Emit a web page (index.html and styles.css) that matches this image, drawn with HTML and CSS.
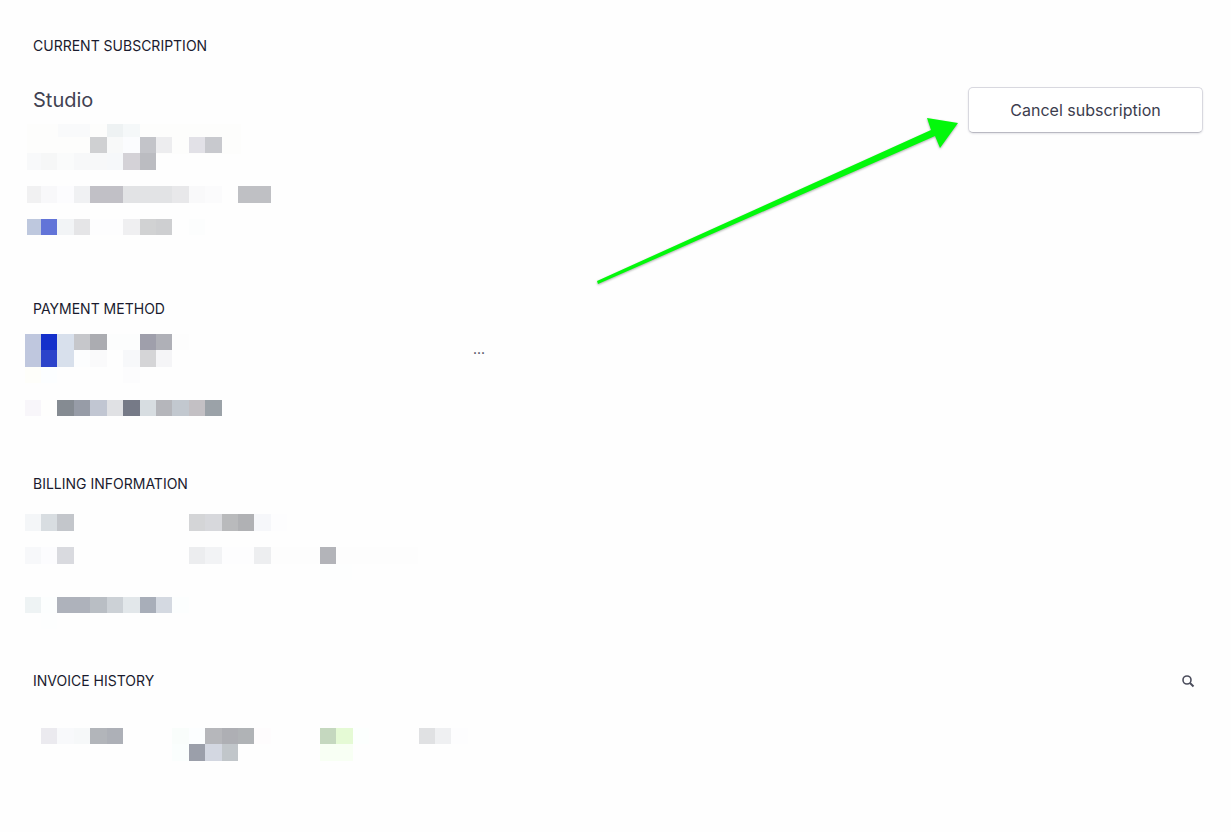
FILE: index.html
```html
<!DOCTYPE html>
<html lang="en">
<head>
    <meta charset="UTF-8">
    <title>Billing</title>
    <link rel="stylesheet" href="styles.css">
</head>
<body>
    <main class="billing">
        <section class="subscription">
            <h2>Current subscription</h2>
            <div class="row">
                <div class="plan">
                    <h3>Studio</h3>
                    <svg class="mosaic" width="260" height="112" shape-rendering="crispEdges" aria-hidden="true">
                        <rect x="2" y="0" width="214" height="30" fill="#fdfdfc"/>
                        <rect x="33" y="0" width="32" height="13" fill="#f9fafb"/>
                        <rect x="82" y="0" width="16" height="13" fill="#eef2f3"/>
                        <rect x="98" y="0" width="17" height="13" fill="#f5f8f9"/>
                        <rect x="65" y="13" width="17" height="16" fill="#cfd0d2"/>
                        <rect x="82" y="13" width="16" height="16" fill="#f8f9f9"/>
                        <rect x="98" y="13" width="17" height="16" fill="#fbfcfe"/>
                        <rect x="115" y="13" width="16" height="16" fill="#c3c4c9"/>
                        <rect x="131" y="13" width="16" height="16" fill="#ededef"/>
                        <rect x="164" y="13" width="16" height="16" fill="#e2e1e7"/>
                        <rect x="180" y="13" width="17" height="16" fill="#c8c9ce"/>
                        <rect x="2" y="29" width="14" height="17" fill="#f8f9fa"/>
                        <rect x="16" y="29" width="16" height="17" fill="#f6f7f7"/>
                        <rect x="32" y="29" width="17" height="17" fill="#fafbfb"/>
                        <rect x="49" y="29" width="49" height="17" fill="#f7f8f9"/>
                        <rect x="82" y="29" width="16" height="17" fill="#f6f8fa"/>
                        <rect x="98" y="29" width="17" height="17" fill="#d4d2d7"/>
                        <rect x="115" y="29" width="16" height="17" fill="#bbbcc1"/>
                        <rect x="2" y="62" width="14" height="17" fill="#f1f1f2"/>
                        <rect x="16" y="62" width="16" height="17" fill="#f8f8fa"/>
                        <rect x="32" y="62" width="17" height="17" fill="#fcfcfe"/>
                        <rect x="49" y="62" width="16" height="17" fill="#f0f1f3"/>
                        <rect x="65" y="62" width="33" height="17" fill="#c1c0c6"/>
                        <rect x="98" y="62" width="49" height="17" fill="#e2e3e5"/>
                        <rect x="147" y="62" width="17" height="17" fill="#e8e8ea"/>
                        <rect x="164" y="62" width="16" height="17" fill="#f9f9fa"/>
                        <rect x="180" y="62" width="17" height="17" fill="#fbfbfc"/>
                        <rect x="213" y="62" width="33" height="17" fill="#bfc0c4"/>
                        <rect x="2" y="95" width="14" height="16" fill="#bec8de"/>
                        <rect x="16" y="95" width="16" height="16" fill="#6274d8"/>
                        <rect x="32" y="95" width="17" height="16" fill="#f2f4f6"/>
                        <rect x="49" y="95" width="16" height="16" fill="#e5e5e7"/>
                        <rect x="65" y="95" width="33" height="16" fill="#fdfdfe"/>
                        <rect x="98" y="95" width="17" height="16" fill="#efeff1"/>
                        <rect x="115" y="95" width="16" height="16" fill="#d1d2d3"/>
                        <rect x="131" y="95" width="16" height="16" fill="#cecfd1"/>
                        <rect x="164" y="95" width="16" height="16" fill="#fcfdfd"/>
                    </svg>
                </div>
                <div class="cancel">
                    <button type="button" class="cancel-button">Cancel subscription</button>
                    <svg class="arrow" width="363" height="170" viewBox="0 0 363 170" aria-hidden="true">
                        <path d="M1 164 L335 13 L331 1 L362 6 L344 31 L339 19 L2 167 Z" fill="#03f80b"/>
                    </svg>
                </div>
            </div>
        </section>

        <section class="payment">
            <h2>Payment method</h2>
            <div class="payment-row">
                <svg class="mosaic" width="200" height="83" shape-rendering="crispEdges" aria-hidden="true">
                    <rect x="0" y="0" width="16" height="33" fill="#bfc7de"/>
                    <rect x="16" y="0" width="16" height="16" fill="#1430cb"/>
                    <rect x="16" y="16" width="16" height="17" fill="#2c43ca"/>
                    <rect x="32" y="0" width="17" height="33" fill="#d8e0ec"/>
                    <rect x="49" y="0" width="16" height="16" fill="#c6c7cb"/>
                    <rect x="65" y="0" width="17" height="16" fill="#abacb1"/>
                    <rect x="82" y="0" width="33" height="16" fill="#fcfdfd"/>
                    <rect x="115" y="0" width="16" height="16" fill="#9f9fab"/>
                    <rect x="131" y="0" width="16" height="16" fill="#afb0b7"/>
                    <rect x="147" y="0" width="17" height="16" fill="#fdfdfd"/>
                    <rect x="49" y="16" width="16" height="17" fill="#fcfdfe"/>
                    <rect x="65" y="16" width="17" height="17" fill="#fafafb"/>
                    <rect x="98" y="16" width="17" height="17" fill="#f7f8fa"/>
                    <rect x="115" y="16" width="16" height="17" fill="#d5d5d7"/>
                    <rect x="131" y="16" width="16" height="17" fill="#f5f5f7"/>
                    <rect x="0" y="33" width="16" height="16" fill="#fefefa"/>
                    <rect x="16" y="33" width="16" height="16" fill="#fcfeff"/>
                    <rect x="98" y="33" width="17" height="16" fill="#fcfcfd"/>
                    <rect x="0" y="66" width="16" height="16" fill="#f8f6fa"/>
                    <rect x="16" y="66" width="16" height="16" fill="#fefefd"/>
                    <rect x="32" y="66" width="17" height="16" fill="#858b92"/>
                    <rect x="49" y="66" width="16" height="16" fill="#979ca7"/>
                    <rect x="65" y="66" width="17" height="16" fill="#c1c6d2"/>
                    <rect x="82" y="66" width="16" height="16" fill="#e0e1e4"/>
                    <rect x="98" y="66" width="17" height="16" fill="#767a87"/>
                    <rect x="115" y="66" width="16" height="16" fill="#d7dde1"/>
                    <rect x="131" y="66" width="16" height="16" fill="#b5b6bb"/>
                    <rect x="147" y="66" width="17" height="16" fill="#c2c8cf"/>
                    <rect x="164" y="66" width="16" height="16" fill="#c3c0c4"/>
                    <rect x="180" y="66" width="17" height="16" fill="#9ba2a8"/>
                </svg>
                <button type="button" class="more" aria-label="More options">...</button>
            </div>
        </section>

        <section class="information">
            <h2>Billing information</h2>
            <svg class="mosaic" width="400" height="117" shape-rendering="crispEdges" aria-hidden="true">
                <rect x="0" y="0" width="16" height="17" fill="#f4f6f8"/>
                <rect x="16" y="0" width="16" height="17" fill="#d8dde1"/>
                <rect x="32" y="0" width="17" height="17" fill="#c3c6cb"/>
                <rect x="164" y="0" width="16" height="17" fill="#d4d5d7"/>
                <rect x="180" y="0" width="17" height="17" fill="#d7d8dc"/>
                <rect x="197" y="0" width="16" height="17" fill="#b9babc"/>
                <rect x="213" y="0" width="16" height="17" fill="#b0b1b4"/>
                <rect x="229" y="0" width="17" height="17" fill="#f6f7fa"/>
                <rect x="246" y="0" width="16" height="17" fill="#fdfdfe"/>
                <rect x="0" y="33" width="16" height="17" fill="#f7f8fa"/>
                <rect x="16" y="33" width="16" height="17" fill="#fcfcfe"/>
                <rect x="32" y="33" width="17" height="17" fill="#d9dadf"/>
                <rect x="164" y="33" width="16" height="17" fill="#ecedef"/>
                <rect x="180" y="33" width="17" height="17" fill="#f2f3f5"/>
                <rect x="197" y="33" width="32" height="17" fill="#fdfdfe"/>
                <rect x="229" y="33" width="17" height="17" fill="#edeef0"/>
                <rect x="246" y="33" width="49" height="17" fill="#fdfdfd"/>
                <rect x="295" y="33" width="16" height="17" fill="#b3b4b9"/>
                <rect x="311" y="33" width="82" height="17" fill="#fdfdfd"/>
                <rect x="295" y="50" width="32" height="16" fill="#fdfefe"/>
                <rect x="0" y="83" width="16" height="16" fill="#eef3f4"/>
                <rect x="16" y="83" width="16" height="16" fill="#fcfefe"/>
                <rect x="32" y="83" width="33" height="16" fill="#aeb2bb"/>
                <rect x="65" y="83" width="17" height="16" fill="#b9bec4"/>
                <rect x="82" y="83" width="16" height="16" fill="#ccd1d6"/>
                <rect x="98" y="83" width="17" height="16" fill="#e2e7ea"/>
                <rect x="115" y="83" width="16" height="16" fill="#a8aeb9"/>
                <rect x="131" y="83" width="16" height="16" fill="#d4d9e1"/>
                <rect x="147" y="83" width="17" height="16" fill="#fcfefe"/>
                <rect x="16" y="99" width="16" height="16" fill="#fdfefe"/>
            </svg>
        </section>

        <section class="invoices">
            <div class="row">
                <h2>Invoice history</h2>
                <button type="button" class="search" aria-label="Search invoices">
                    <svg width="14" height="14" viewBox="0 0 14 14" aria-hidden="true">
                        <circle cx="6" cy="6" r="4" fill="none" stroke="#4b4d5c" stroke-width="1.6"/>
                        <path d="M9 9 L12.5 12.5" stroke="#4b4d5c" stroke-width="2"/>
                    </svg>
                </button>
            </div>
            <svg class="mosaic" width="450" height="33" shape-rendering="crispEdges" aria-hidden="true">
                <rect x="16" y="0" width="16" height="16" fill="#ebeaef"/>
                <rect x="32" y="0" width="17" height="16" fill="#f8f9fb"/>
                <rect x="49" y="0" width="16" height="16" fill="#f6f8f9"/>
                <rect x="65" y="0" width="17" height="16" fill="#b2b5ba"/>
                <rect x="82" y="0" width="16" height="16" fill="#adb0b7"/>
                <rect x="147" y="0" width="17" height="16" fill="#f9fdfb"/>
                <rect x="164" y="0" width="16" height="16" fill="#fcfeff"/>
                <rect x="180" y="0" width="17" height="16" fill="#b6b7bb"/>
                <rect x="197" y="0" width="16" height="16" fill="#aeafb4"/>
                <rect x="213" y="0" width="16" height="16" fill="#b0b3b6"/>
                <rect x="229" y="0" width="17" height="16" fill="#fefcfd"/>
                <rect x="147" y="16" width="17" height="17" fill="#fafefd"/>
                <rect x="164" y="16" width="16" height="17" fill="#9b9faa"/>
                <rect x="180" y="16" width="17" height="17" fill="#d3d7e1"/>
                <rect x="197" y="16" width="16" height="17" fill="#c1c6ca"/>
                <rect x="295" y="0" width="16" height="16" fill="#c5d8bf"/>
                <rect x="311" y="0" width="17" height="16" fill="#e5fad5"/>
                <rect x="295" y="16" width="33" height="17" fill="#f8fff4"/>
                <rect x="328" y="0" width="16" height="16" fill="#fcfffe"/>
                <rect x="394" y="0" width="16" height="16" fill="#e0e1e3"/>
                <rect x="410" y="0" width="16" height="16" fill="#eff0f2"/>
                <rect x="426" y="0" width="17" height="16" fill="#fdfdfe"/>
            </svg>
        </section>
    </main>
</body>
</html>
```

FILE: styles.css
```css
body {
    margin: 0;
    background-color: #fefefe;
    color: #1a1b2e;
    font-family: Inter, "Liberation Sans", sans-serif;
}
.billing {
    padding: 36px 28px 64px 25px;
}
h2 {
    margin: 0;
    padding-left: 8px;
    font-size: 14px;
    line-height: 20px;
    font-weight: 400;
    text-transform: uppercase;
}
h3 {
    margin: 0 0 12px;
    padding-left: 8px;
    color: #414252;
    font-size: 20px;
    line-height: 24px;
    font-weight: 400;
}
button {
    padding: 0;
    border: none;
    background: none;
    color: #3c3d4e;
    font-family: inherit;
    cursor: pointer;
}
.mosaic {
    display: block;
}
.row {
    display: flex;
    justify-content: space-between;
    align-items: flex-start;
}
.subscription {
    margin-bottom: 63px;
}
.subscription .row {
    padding-top: 31px;
}
.plan {
    padding-top: 1px;
}
.cancel {
    position: relative;
}
.cancel-button {
    display: block;
    min-width: 235px;
    padding: 10px 20px;
    border: 1px solid #d8d8df;
    border-bottom-color: #b9b9c2;
    border-radius: 5px;
    background-color: #fff;
    box-shadow: 0 1px 2px #e4e4e8;
    font-size: 16px;
    line-height: 24px;
    font-weight: 400;
}
/* the arrow lies over the page and ends at the button */
.arrow {
    position: absolute;
    top: 30px;
    right: 100%;
    margin-right: 9px;
    filter: drop-shadow(0 1px 1px #0005);
    pointer-events: none;
}
.payment {
    margin-bottom: 57px;
}
.payment-row {
    display: grid;
    grid-template-columns: 448px auto;
    justify-content: start;
    align-items: start;
    padding-top: 15px;
}
.more {
    padding-top: 5px;
    font-size: 14px;
    line-height: 20px;
}
.information {
    margin-bottom: 40px;
}
.information .mosaic {
    margin-top: 20px;
}
.search {
    padding: 3px 8px;
}
.search svg {
    display: block;
}
.invoices .mosaic {
    margin-top: 37px;
}
```
